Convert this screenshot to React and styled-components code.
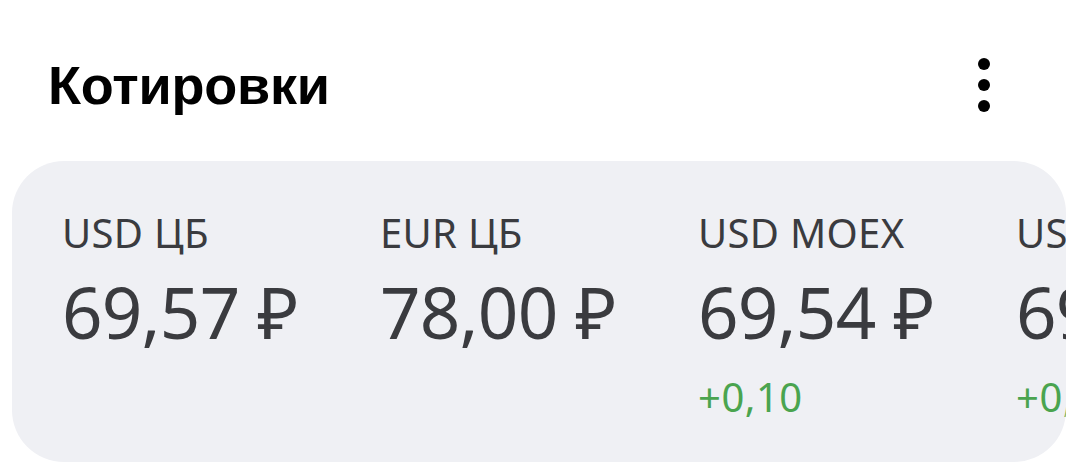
import React from "react";
import styled, { createGlobalStyle } from "styled-components";

const GlobalStyle = createGlobalStyle`
    body {
        margin: 0;
        background: #fff;
        font-family: "Noto Sans", "Open Sans", sans-serif;
    }
`;

const Page = styled.div`
    width: 1080px;
    height: 474px;
    overflow: hidden;
`;

// заголовок с меню
const Header = styled.div`
    display: flex;
    align-items: center;
    justify-content: space-between;
    padding: 52px 90px 0 48px;
    height: 66px;
`;

const Title = styled.h2`
    margin: 0;
    font-family: "Liberation Sans", Arial, sans-serif;
    font-weight: 700;
    font-size: 54px;
    color: #000;
    letter-spacing: -0.2px;
`;

const MenuButton = styled.button`
    border: none;
    background: none;
    padding: 0;
    display: flex;
    flex-direction: column;
    gap: 9px;
    cursor: pointer;
    span {
        width: 12px;
        height: 12px;
        border-radius: 50%;
        background: #000;
    }
`;

const Card = styled.div`
    margin: 43px 14px 0 12px;
    height: 301px;
    background: #eff0f4;
    border-radius: 52px;
    display: flex;
    overflow: hidden;
    padding-top: 48px;
    box-sizing: border-box;
`;

const Quote = styled.div`
    flex: 0 0 318px;
    padding-left: 50px;
    box-sizing: border-box;
    white-space: nowrap;
`;

const Label = styled.div`
    font-size: 40px;
    line-height: 48px;
    color: #3a3b3f;
    letter-spacing: 0.3px;
`;

const Value = styled.div`
    margin-top: 12px;
    font-size: 71px;
    line-height: 86px;
    color: #3a3b3f;
    letter-spacing: -0.8px;
`;

const Change = styled.div`
    margin-top: 20px;
    font-size: 40px;
    line-height: 44px;
    color: ${(p) => (p.$up ? "#4aa44f" : "#e04a3a")};
    letter-spacing: 0.5px;
`;

const quotes = [
    { label: "USD ЦБ", value: "69,57 ₽" },
    { label: "EUR ЦБ", value: "78,00 ₽" },
    { label: "USD MOEX", value: "69,54 ₽", change: "+0,10" },
    { label: "USD MOEX", value: "69,54 ₽", change: "+0,10" },
];

const App = () => {
    return (
        <Page>
            <GlobalStyle />
            <Header>
                <Title>Котировки</Title>
                <MenuButton aria-label="Меню">
                    <span />
                    <span />
                    <span />
                </MenuButton>
            </Header>
            <Card>
                {quotes.map((q, i) => (
                    <Quote key={i}>
                        <Label>{q.label}</Label>
                        <Value>{q.value}</Value>
                        {q.change && <Change $up>{q.change}</Change>}
                    </Quote>
                ))}
            </Card>
        </Page>
    );
};

export default App;
